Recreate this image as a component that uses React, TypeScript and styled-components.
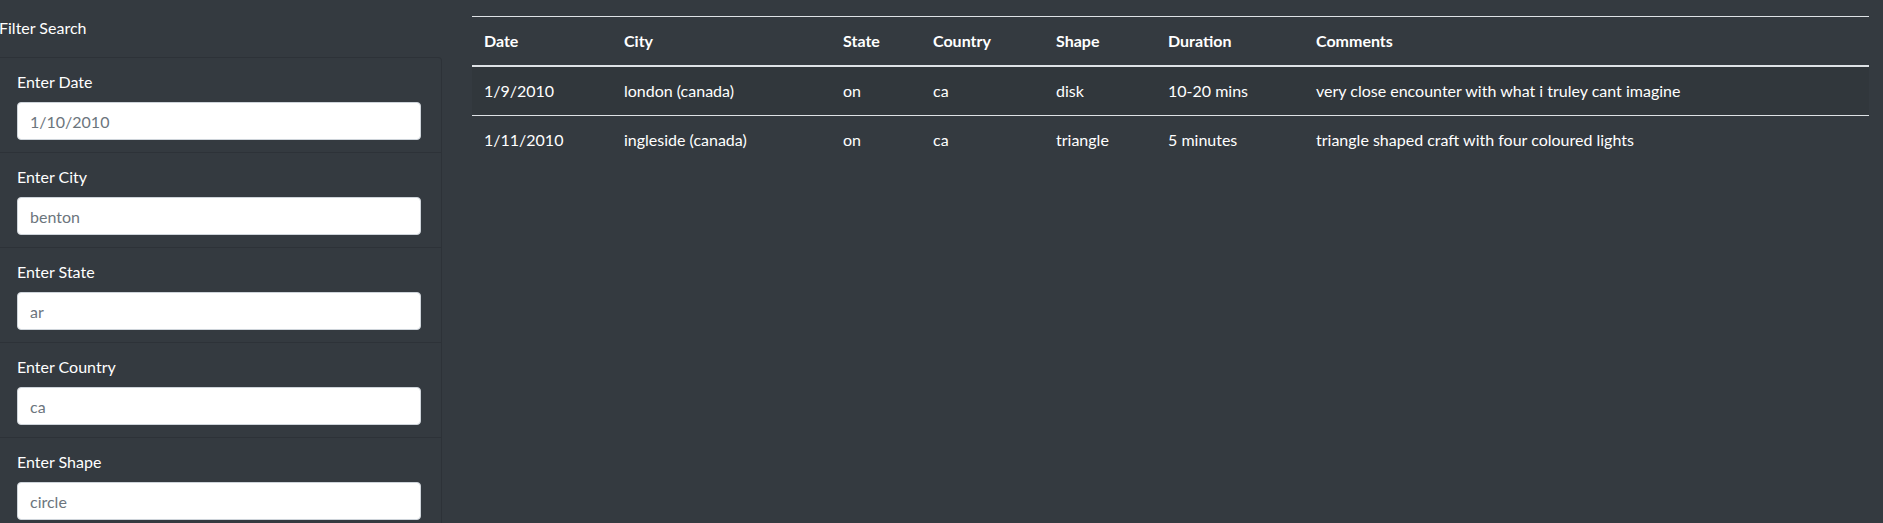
import { createGlobalStyle, styled } from "styled-components";

const GlobalStyle = createGlobalStyle`
  html, body {
    margin: 0;
    padding: 0;
    background: #343a40;
    color: #ffffff;
    font-family: Lato, "Liberation Sans", sans-serif;
    font-size: 16px;
    line-height: 24px;
  }
  * { box-sizing: border-box; }
`;

const Page = styled.div`
  display: flex;
  align-items: flex-start;
  gap: 30px;
  padding-right: 14px;
`;

const Sidebar = styled.aside`
  flex: 0 0 446px;
  margin-left: -4px;
`;

const Heading = styled.div`
  padding: 16px 0 0 3px;
  margin-bottom: 17px;
  line-height: 24px;
`;

const FilterList = styled.ul`
  list-style: none;
  margin: 0;
  padding: 0;
`;

const FilterItem = styled.li`
  padding: 12px 20px;
  border: 1px solid rgba(0, 0, 0, 0.125);
  background: #343a40;

  & + & {
    border-top-width: 0;
  }
  &:first-child {
    border-top-left-radius: 4px;
    border-top-right-radius: 4px;
  }
`;

const Label = styled.label`
  display: block;
  margin-bottom: 8px;
  line-height: 24px;
`;

const Input = styled.input`
  display: block;
  width: 100%;
  height: 38px;
  padding: 6px 12px;
  border: 1px solid #ced4da;
  border-radius: 4px;
  background: #ffffff;
  color: #495057;
  font-family: inherit;
  font-size: 16px;
  line-height: 24px;

  &::placeholder {
    color: #6c757d;
  }
`;

const Main = styled.main`
  flex: 1;
  padding-top: 16px;
`;

const Table = styled.table`
  width: 100%;
  border-collapse: collapse;
  color: #ffffff;
`;

const Th = styled.th<{ $w?: number }>`
  width: ${(p) => (p.$w ? `${p.$w}px` : "auto")};
  padding: 12px;
  text-align: left;
  font-weight: 700;
  vertical-align: bottom;
  border-top: 1px solid #dee2e6;
  border-bottom: 2px solid #dee2e6;
`;

const Row = styled.tr`
  &:nth-of-type(odd) {
    background: rgba(0, 0, 0, 0.05);
  }
`;

const Td = styled.td`
  padding: 12px;
  vertical-align: top;
  border-top: 1px solid #dee2e6;
`;

const filters = [
  { label: "Enter Date", placeholder: "1/10/2010" },
  { label: "Enter City", placeholder: "benton" },
  { label: "Enter State", placeholder: "ar" },
  { label: "Enter Country", placeholder: "ca" },
  { label: "Enter Shape", placeholder: "circle" },
];

const columns = [
  { name: "Date", w: 140 },
  { name: "City", w: 219 },
  { name: "State", w: 90 },
  { name: "Country", w: 123 },
  { name: "Shape", w: 112 },
  { name: "Duration", w: 148 },
  { name: "Comments" },
];

const sightings = [
  ["1/9/2010", "london (canada)", "on", "ca", "disk", "10-20 mins", "very close encounter with what i truley cant imagine"],
  ["1/11/2010", "ingleside (canada)", "on", "ca", "triangle", "5 minutes", "triangle shaped craft with four coloured lights"],
];

export default function App() {
  return (
    <>
      <GlobalStyle />
      <Page>
        <Sidebar>
          <Heading>Filter Search</Heading>
          <FilterList>
            {filters.map((f) => (
              <FilterItem key={f.label}>
                <Label>{f.label}</Label>
                <Input type="text" placeholder={f.placeholder} />
              </FilterItem>
            ))}
          </FilterList>
        </Sidebar>
        <Main>
          <Table>
            <thead>
              <tr>
                {columns.map((c) => (
                  <Th key={c.name} $w={c.w}>
                    {c.name}
                  </Th>
                ))}
              </tr>
            </thead>
            <tbody>
              {sightings.map((s) => (
                <Row key={s[0]}>
                  {s.map((v, i) => (
                    <Td key={i}>{v}</Td>
                  ))}
                </Row>
              ))}
            </tbody>
          </Table>
        </Main>
      </Page>
    </>
  );
}
